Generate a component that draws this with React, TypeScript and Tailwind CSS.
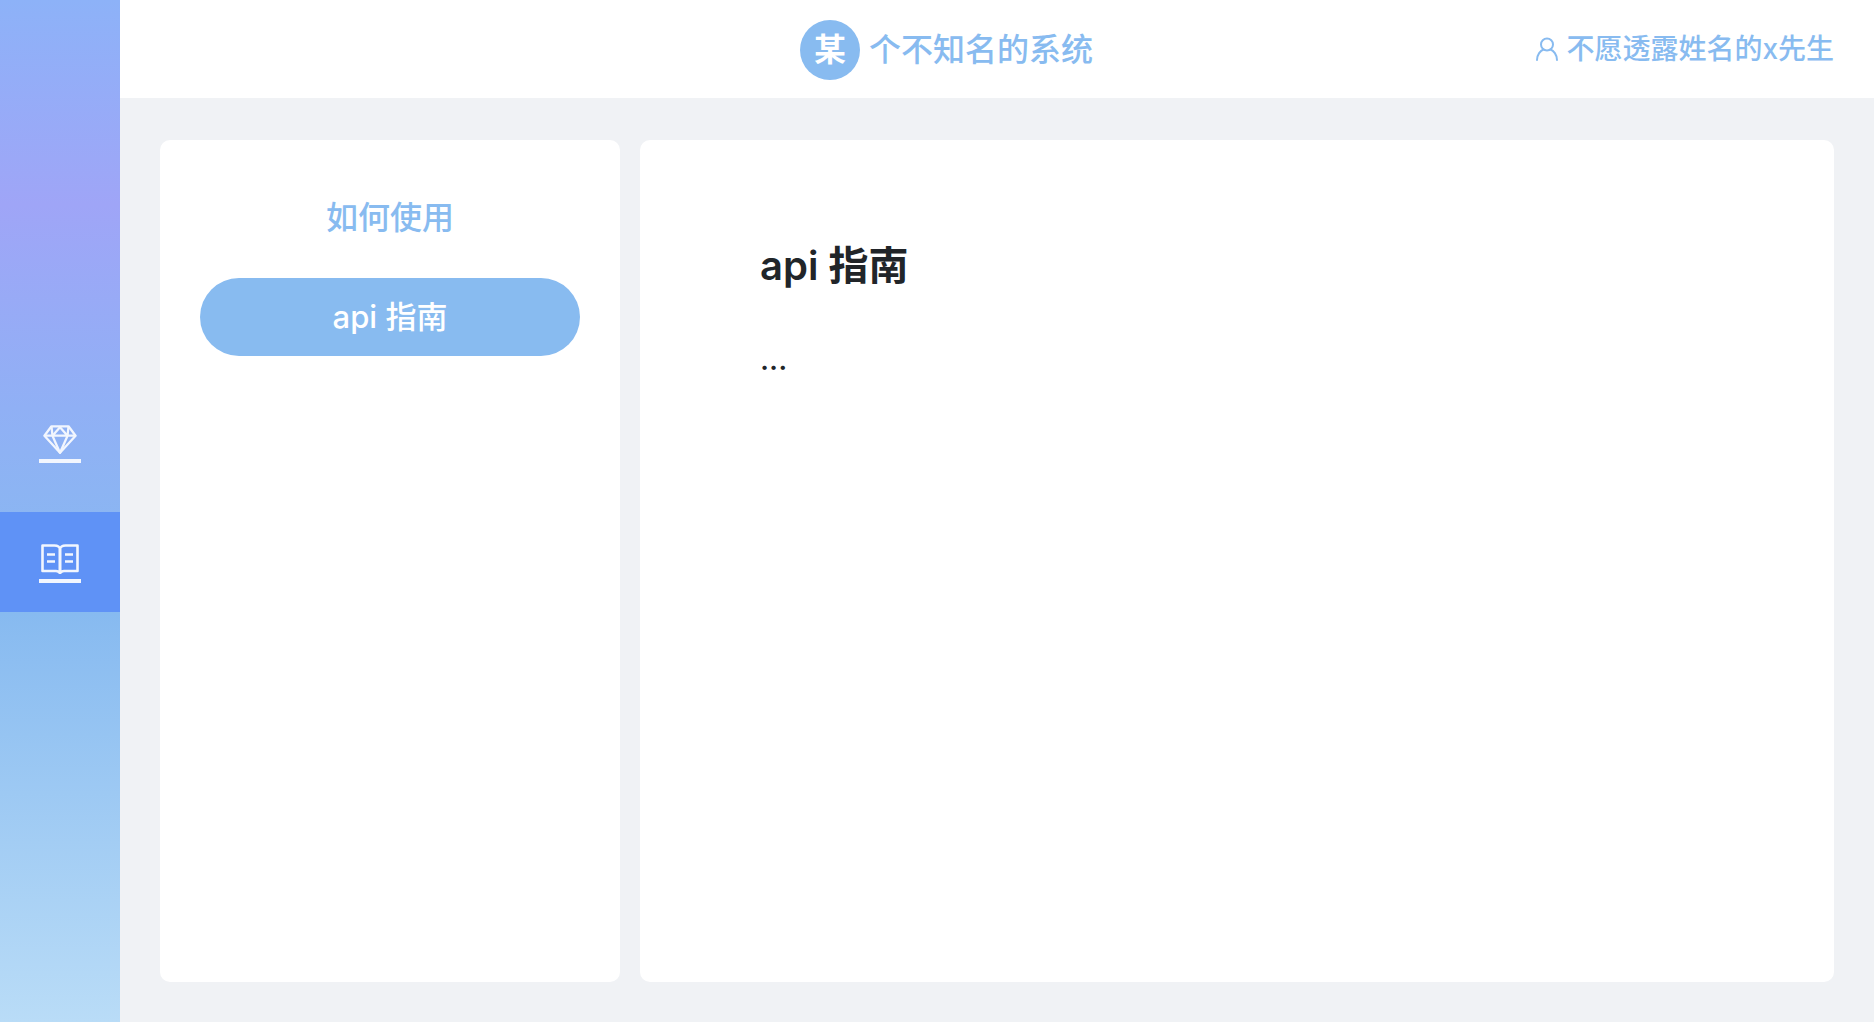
const cjk = "font-['Inter','Noto_Sans_CJK_SC',sans-serif]"

const DiamondIcon = () => (
  <svg width="34" height="31" viewBox="0 0 36 32" fill="none" stroke="currentColor" strokeWidth="2.400" strokeLinejoin="round">
    <path d="M9 2h18l7.500 10L18 30 1.500 12z" />
    <path d="M1.500 12h33M18 30L10 12l8-9 8 9z" />
    <path d="M9 2l1 10M27 2l-1 10" />
  </svg>
)

const BookIcon = () => (
  <svg width="38" height="30" viewBox="0 0 38 30" fill="none" stroke="currentColor" strokeWidth="2.600" strokeLinejoin="round">
    <path d="M1.500 1.500h12c3 0 5.500 1.500 5.500 4v23.500c-.8-1-2-2-4-2H1.500z" />
    <path d="M36.500 1.500h-12c-3 0-5.500 1.500-5.500 4v23.500c.8-1 2-2 4-2h13.500z" />
    <path d="M6 10.500h8M6 17.500h8M24 10.500h8M24 17.500h8" />
  </svg>
)

const UserIcon = () => (
  <svg width="22" height="24" viewBox="0 0 22 24" fill="none" stroke="currentColor" strokeWidth="2" strokeLinecap="round">
    <circle cx="11" cy="7.500" r="6" />
    <path d="M1 23c0-5.500 3.500-9.500 6.500-10.500M21 23c0-5.500-3.500-9.500-6.500-10.500" />
  </svg>
)

const SideItem = ({ active, children }: { active?: boolean; children: React.ReactNode }) => (
  <div className={`h-[100px] flex flex-col items-center justify-center text-[#f2f6fe] ${active ? "bg-[#5f92f6]" : ""}`}>
    <div className="h-[32px] mt-[2px] flex items-center justify-center">{children}</div>
    <div className="w-[42px] h-[4px] mt-[4px] bg-[#f2f6fe]" />
  </div>
)

export default function App() {
  return (
    <div className={`flex w-full h-[1022px] overflow-hidden bg-[#f0f2f5] ${cjk}`}>
      <aside className="w-[120px] shrink-0 pt-[392px] flex flex-col gap-[20px] bg-[linear-gradient(180deg,#8db2f8_0%,#9fa5f7_20%,#90b0f5_40%,#87baf0_60%,#b9dcf7_100%)]">
        <SideItem>
          <DiamondIcon />
        </SideItem>
        <SideItem active>
          <BookIcon />
        </SideItem>
      </aside>

      <div className="flex-1 flex flex-col min-w-0">
        <header className="relative h-[98px] shrink-0 bg-white flex items-center justify-end pr-[40px] text-[#88bbf0]">
          <div className="absolute left-[680px] top-[20px] flex items-center gap-[9px]">
            <div className="w-[60px] h-[60px] rounded-full bg-[#88bbf0] text-white text-[32px] font-semibold flex items-center justify-center">
              某
            </div>
            <span className="text-[32px] leading-[60px] font-medium">个不知名的系统</span>
          </div>
          <div className="flex items-center gap-[8px] text-[28px] font-medium">
            <UserIcon />
            <span>不愿透露姓名的x先生</span>
          </div>
        </header>

        <main className="flex-1 flex gap-[20px] pt-[42px] pb-[40px] pl-[40px] pr-[40px] min-h-0">
          <section className="w-[460px] shrink-0 bg-white rounded-[10px] px-[40px] pt-[54px]">
            <h2 className="text-[32px] leading-[48px] text-center font-medium text-[#88bbf0]">如何使用</h2>
            <div className="mt-[36px] h-[78px] rounded-full bg-[#88bbf0] text-white text-[31px] font-medium flex items-center justify-center">
              api 指南
            </div>
          </section>
          <section className="flex-1 bg-white rounded-[10px] pl-[120px] pt-[102px]">
            <h1 className="text-[40px] leading-[48px] font-semibold text-[#212529]">api 指南</h1>
            <p className="mt-[48px] text-[30px] leading-[42px] font-medium text-[#212529]">...</p>
          </section>
        </main>
      </div>
    </div>
  )
}
